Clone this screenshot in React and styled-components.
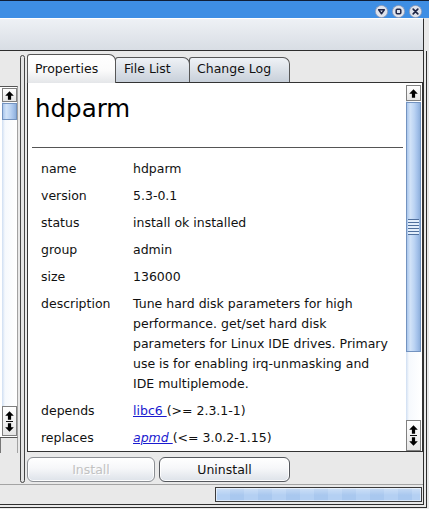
import React from "react";
import styled, { createGlobalStyle } from "styled-components";

const Global = createGlobalStyle`
  html, body { margin: 0; padding: 0; background: #e9e9e9; }
  body {
    font-family: "DejaVu Sans", "Liberation Sans", sans-serif;
    font-size: 12.5px;
    color: #111;
    overflow: hidden;
  }
  * { box-sizing: border-box; }
`;

const Window = styled.div`
  width: 429px;
  height: 509px;
  display: flex;
  flex-direction: column;
  background: #e9e9e9;
  overflow: hidden;
`;

const TitleBar = styled.div`
  height: 18px;
  border-top: 1px solid #0f1e36;
  background: #3e8ee4;
  display: flex;
  justify-content: flex-end;
  align-items: flex-start;
  padding: 4px 7px 0 0;
  gap: 4px;
`;

const WinBtn = styled.svg`
  display: block;
  flex: none;
`;

const Toolbar = styled.div`
  width: 424px;
  height: 33px;
  border-top: 1px solid #ffffff;
  border-bottom: 1px solid #2e2e2e;
  border-right: 1px solid #2e2e2e;
  background: linear-gradient(#eef1f5, #d8dde4);
`;

const OuterFrame = styled.div`
  width: 427px;
  height: 457px;
  border-right: 1px solid #2e2e2e;
  border-bottom: 1px solid #2e2e2e;
  padding: 0 2px 2px 0;
`;

const InnerFrame = styled.div`
  width: 424px;
  height: 454px;
  border-right: 1px solid #2e2e2e;
  border-bottom: 1px solid #2e2e2e;
  display: flex;
  flex-direction: column;
`;

const Main = styled.div`
  height: 433px;
  display: flex;
`;

const LeftPane = styled.div`
  width: 18px;
  flex: none;
  display: flex;
  flex-direction: column;
  padding-top: 35px;
`;

const ListBox = styled.div`
  height: 352px;
  border-top: 1px solid #555;
  border-bottom: 1px solid #555;
  border-right: 1px solid #a2a2a2;
  background: #fff;
  display: flex;
  padding-left: 2px;
`;

const ListStub = styled.div`
  height: 15px;
  border-left: 1px solid #777;
  border-right: 1px solid #a2a2a2;
`;

const Splitter = styled.div`
  width: 9px;
  flex: none;
  padding: 4px 0 1px 2px;
  display: flex;
`;

const SplitHandle = styled.div`
  width: 5px;
  border: 1px solid #454545;
  border-radius: 3px;
  background: #e4e4e4;
`;

const RightPane = styled.div`
  flex: 1;
  display: flex;
  flex-direction: column;
  padding-top: 3px;
`;

const TabRow = styled.div`
  height: 28px;
  display: flex;
  align-items: flex-end;
  position: relative;
  z-index: 2;
`;

const Tab = styled.div`
  width: ${(p) => p.$w}px;
  height: ${(p) => (p.$active ? 29 : 25)}px;
  margin-left: ${(p) => (p.$first ? 0 : -1)}px;
  margin-bottom: ${(p) => (p.$active ? -1 : 0)}px;
  border: 1px solid #575757;
  border-bottom: none;
  border-radius: 3px 7px 0 0;
  background: ${(p) =>
    p.$active
      ? "linear-gradient(#ffffff, #fbfbfb 55%, #e4e6e9)"
      : "linear-gradient(#eff2f6, #c8d0da)"};
  display: flex;
  align-items: flex-end;
  padding: 0 0 ${(p) => (p.$active ? 7 : 6)}px ${(p) => p.$pl}px;
  line-height: 15px;
  color: #111;
  font-size: 12.5px;
  white-space: nowrap;
  position: relative;
  z-index: ${(p) => (p.$active ? 2 : 1)};
`;

const Panel = styled.div`
  height: 370px;
  border: 1px solid #333;
  background: #fff;
  display: flex;
`;

const Content = styled.div`
  flex: 1;
  overflow: hidden;
  padding-left: 4px;
  padding-right: 3px;
`;

const Heading = styled.h1`
  margin: 0;
  padding: 11px 0 0 3px;
  font-weight: normal;
  font-size: 24.5px;
  line-height: 30px;
  color: #000;
`;

const Rule = styled.hr`
  margin: 23px 0 0;
  border: none;
  border-top: 1px solid #555;
  height: 0;
`;

const Props = styled.div`
  display: grid;
  grid-template-columns: 92px 1fr;
  row-gap: 7px;
  margin-top: 11px;
  padding-left: 9px;
  line-height: 20px;
  font-size: 12.5px;
  color: #111;
`;

const Label = styled.div``;
const Value = styled.div`
  white-space: nowrap;
`;

const Link = styled.a`
  color: #1a1acf;
  text-decoration: underline;
  font-style: ${(p) => (p.$italic ? "italic" : "normal")};
`;

const VScroll = styled.div`
  width: 15px;
  flex: none;
  margin: ${(p) => (p.$left ? "1px 0 1px 0" : "2px 1px 0 0")};
  display: flex;
  flex-direction: column;
`;

const ScrollBtn = styled.div`
  height: ${(p) => p.$h}px;
  flex: none;
  border: 1px solid #808080;
  background: linear-gradient(#ffffff, #e6e6e6);
  display: flex;
  flex-direction: column;
  align-items: center;
  justify-content: center;
  gap: 1px;
`;

const Track = styled.div`
  flex: 1;
  background: linear-gradient(90deg, #cfdef2, #f6f9fd 3px, #ffffff);
  padding-top: 1px;
  display: flex;
  flex-direction: column;
`;

const Thumb = styled.div`
  height: ${(p) => p.$h}px;
  border: 1px solid #7393c0;
  background: linear-gradient(90deg, #a9c6ec, #d2e3f8 25%, #bcd4f3 55%, #a3c1ea 80%, #8fb0db);
  display: flex;
  align-items: center;
  justify-content: center;
`;

const Grip = styled.div`
  width: 11px;
  height: 16px;
  background: repeating-linear-gradient(#4f6f9c 0 1px, #e3eefb 1px 3px);
`;

const Dash = styled.div`
  width: 7px;
  height: 1px;
  background: #111;
`;

const ButtonRow = styled.div`
  display: flex;
  gap: 4px;
  margin-top: 5px;
`;

const Button = styled.button`
  width: ${(p) => p.$w}px;
  height: 25px;
  border: 1px solid ${(p) => (p.disabled ? "#8c8f94" : "#55585d")};
  border-radius: 6px;
  background: linear-gradient(#ffffff, #f6f7f9 45%, #dde2e9);
  box-shadow: inset 0 0 0 1px rgba(255, 255, 255, 0.9);
  font: 12.5px "DejaVu Sans", "Liberation Sans", sans-serif;
  line-height: 23px;
  color: #111;
  padding: 0;
  &:disabled {
    color: #c2c2c2;
    text-shadow: 1px 1px 0 #ffffff;
  }
`;

const StatusBar = styled.div`
  height: 20px;
  border-top: 1px solid #a4a4a4;
  display: flex;
  justify-content: flex-end;
  padding: 2px 1px 0 0;
`;

const Progress = styled.div`
  width: 207px;
  height: 15px;
  border: 1px solid #3a3a3a;
  background: linear-gradient(rgba(255, 255, 255, 0.35), rgba(255, 255, 255, 0) 55%),
    repeating-linear-gradient(90deg, #b4d0f3 0 14px, #a9c8ef 14px 28px);
  box-shadow: inset 0 0 0 1px rgba(255, 255, 255, 0.55);
`;

const ArrowUp = () => (
  <svg width="9" height="9" viewBox="0 0 9 9">
    <path d="M4.5 0.3 L8.8 4.8 L6.1 4.8 L6.1 8.7 L2.9 8.7 L2.9 4.8 L0.2 4.8 Z" fill="#000" />
  </svg>
);
const ArrowDown = () => (
  <svg width="9" height="9" viewBox="0 0 9 9">
    <path d="M4.5 8.7 L8.8 4.2 L6.1 4.2 L6.1 0.3 L2.9 0.3 L2.9 4.2 L0.2 4.2 Z" fill="#000" />
  </svg>
);

const CircleBtn = ({ children }) => (
  <WinBtn width="13" height="13" viewBox="0 0 13 13">
    <circle cx="6.5" cy="6.5" r="6.1" fill="#dfe3ec" stroke="#8b97b4" strokeWidth="0.8" />
    {children}
  </WinBtn>
);

const ScrollBar = ({ left, thumb, upH, pairH }) => (
  <VScroll $left={left}>
    <ScrollBtn $h={upH}>
      <ArrowUp />
    </ScrollBtn>
    <Track>
      <Thumb $h={thumb}>{thumb > 40 && <Grip />}</Thumb>
    </Track>
    <ScrollBtn $h={pairH}>
      <ArrowUp />
      <Dash />
      <ArrowDown />
    </ScrollBtn>
  </VScroll>
);

export default function App() {
  return (
    <>
      <Global />
      <Window>
        <TitleBar>
          <CircleBtn>
            <path d="M3.7 4.7 L9.3 4.7 L6.5 8.7 Z" fill="none" stroke="#1f2546" strokeWidth="1.5" strokeLinejoin="round" />
          </CircleBtn>
          <CircleBtn>
            <rect x="4.2" y="4.2" width="4.6" height="4.6" rx="1" fill="none" stroke="#1f2546" strokeWidth="1.5" />
          </CircleBtn>
          <CircleBtn>
            <path d="M4.2 4.2 L8.8 8.8 M8.8 4.2 L4.2 8.8" stroke="#1f2546" strokeWidth="1.7" strokeLinecap="round" />
          </CircleBtn>
        </TitleBar>
        <Toolbar />
        <OuterFrame>
          <InnerFrame>
            <Main>
              <LeftPane>
                <ListBox>
                  <ScrollBar left thumb={17} upH={14} pairH={30} />
                </ListBox>
                <ListStub />
              </LeftPane>
              <Splitter>
                <SplitHandle />
              </Splitter>
              <RightPane>
                <TabRow>
                  <Tab $w={89} $pl={7} $first $active>Properties</Tab>
                  <Tab $w={75} $pl={8}>File List</Tab>
                  <Tab $w={101} $pl={7}>Change Log</Tab>
                </TabRow>
                <Panel>
                  <Content>
                    <Heading>hdparm</Heading>
                    <Rule />
                    <Props>
                      <Label>name</Label>
                      <Value>hdparm</Value>
                      <Label>version</Label>
                      <Value>5.3-0.1</Value>
                      <Label>status</Label>
                      <Value>install ok installed</Value>
                      <Label>group</Label>
                      <Value>admin</Value>
                      <Label>size</Label>
                      <Value>136000</Value>
                      <Label>description</Label>
                      <Value>
                        Tune hard disk parameters for high
                        <br />
                        performance. get/set hard disk
                        <br />
                        parameters for Linux IDE drives. Primary
                        <br />
                        use is for enabling irq-unmasking and
                        <br />
                        IDE multiplemode.
                      </Value>
                      <Label>depends</Label>
                      <Value>
                        <Link href="#">libc6 </Link>
                        {"(>= 2.3.1-1)"}
                      </Value>
                      <Label>replaces</Label>
                      <Value>
                        <Link href="#" $italic>apmd </Link>
                        {"(<= 3.0.2-1.15)"}
                      </Value>
                    </Props>
                  </Content>
                  <ScrollBar thumb={250} upH={16} pairH={31} />
                </Panel>
                <ButtonRow>
                  <Button $w={128} disabled>Install</Button>
                  <Button $w={131}>Uninstall</Button>
                </ButtonRow>
              </RightPane>
            </Main>
            <StatusBar>
              <Progress />
            </StatusBar>
          </InnerFrame>
        </OuterFrame>
      </Window>
    </>
  );
}
